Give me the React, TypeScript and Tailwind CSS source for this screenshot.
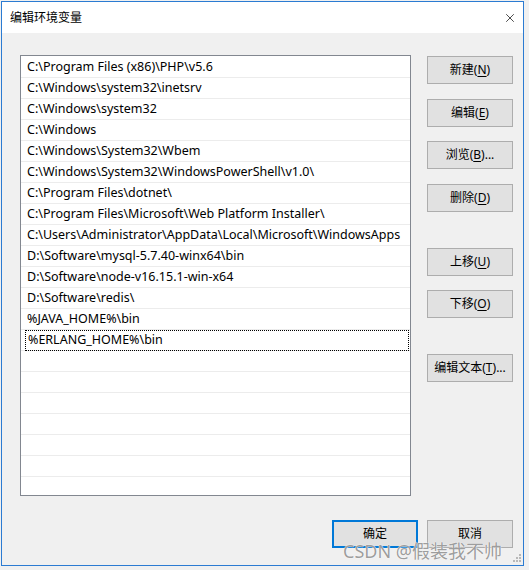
import { X } from 'lucide-react'

const paths = [
  'C:\\Program Files (x86)\\PHP\\v5.6',
  'C:\\Windows\\system32\\inetsrv',
  'C:\\Windows\\system32',
  'C:\\Windows',
  'C:\\Windows\\System32\\Wbem',
  'C:\\Windows\\System32\\WindowsPowerShell\\v1.0\\',
  'C:\\Program Files\\dotnet\\',
  'C:\\Program Files\\Microsoft\\Web Platform Installer\\',
  'C:\\Users\\Administrator\\AppData\\Local\\Microsoft\\WindowsApps',
  'D:\\Software\\mysql-5.7.40-winx64\\bin',
  'D:\\Software\\node-v16.15.1-win-x64',
  'D:\\Software\\redis\\',
  '%JAVA_HOME%\\bin',
  '%ERLANG_HOME%\\bin',
]

const font = { fontFamily: '"Noto Sans", "Noto Sans CJK SC", sans-serif' }

function WinButton({ label, mnemonic, suffix = '', className = '' }: { label: string; mnemonic?: string; suffix?: string; className?: string }) {
  return (
    <div
      className={`h-[28px] w-[86px] shrink-0 border border-[#adadad] bg-[#e1e1e1] flex items-center justify-center text-[12px] text-black ${className}`}
    >
      <span>
        {label}
        {mnemonic && (
          <>
            (<span className="underline underline-offset-2">{mnemonic}</span>)
          </>
        )}
        {suffix}
      </span>
    </div>
  )
}

export default function App() {
  const emptyRows = 7

  return (
    <div className="w-[529px] h-[570px] bg-[#f0f0f0] pt-px pl-px overflow-hidden" style={font}>
      {/* Dialog window */}
      <div className="relative w-[523px] h-[565px] border border-[#2b7bd2] bg-[#f0f0f0] flex flex-col">
        {/* Title bar */}
        <div className="h-[31px] shrink-0 bg-white flex items-center justify-between pl-[8px] pr-[5px]">
          <span className="text-[12px] text-black">编辑环境变量</span>
          <X className="w-[14px] h-[14px] text-black mr-[1px]" strokeWidth={1.2} />
        </div>

        {/* Body */}
        <div className="flex-1 flex flex-col pl-[18px] pr-[10px] pt-[22px]">
          <div className="flex gap-[16px]">
            {/* Path list */}
            <div className="w-[391px] h-[441px] border border-[#828790] bg-white overflow-hidden pt-[1px]">
              {paths.map((p, i) => (
                <div
                  key={p}
                  className="h-[21px] border-b border-[#ececec] flex items-center text-[12.5px] text-black"
                >
                  {i === paths.length - 1 ? (
                    <div className="h-[21px] w-[384px] ml-[4px] border border-dotted border-black flex items-center pl-[2px]">
                      {p}
                    </div>
                  ) : (
                    <span className="pl-[6px]">{p}</span>
                  )}
                </div>
              ))}
              {Array.from({ length: emptyRows }).map((_, i) => (
                <div key={i} className="h-[21px] border-b border-[#ececec]" />
              ))}
            </div>

            {/* Right-hand buttons */}
            <div className="flex flex-col">
              <WinButton label="新建" mnemonic="N" className="mt-[1px]" />
              <WinButton label="编辑" mnemonic="E" className="mt-[15px]" />
              <WinButton label="浏览" mnemonic="B" suffix="..." className="mt-[14px]" />
              <WinButton label="删除" mnemonic="D" className="mt-[15px]" />
              <WinButton label="上移" mnemonic="U" className="mt-[36px]" />
              <WinButton label="下移" mnemonic="O" className="mt-[14px]" />
              <WinButton label="编辑文本" mnemonic="T" suffix="..." className="mt-[36px]" />
            </div>
          </div>

          {/* OK / Cancel */}
          <div className="flex justify-end gap-[9px] mt-[24px]">
            <div className="h-[28px] w-[86px] border-2 border-[#0078d7] bg-[#e1e1e1] flex items-center justify-center text-[12px] text-black">
              确定
            </div>
            <WinButton label="取消" />
          </div>
        </div>

        {/* Resize grip */}
        <svg className="absolute right-[2px] bottom-[3px]" width="8" height="8" viewBox="0 0 8 8">
          <rect x="6" y="0" width="2" height="2" fill="#b8b8b8" />
          <rect x="3" y="3" width="2" height="2" fill="#b8b8b8" />
          <rect x="6" y="3" width="2" height="2" fill="#b8b8b8" />
          <rect x="0" y="6" width="2" height="2" fill="#b8b8b8" />
          <rect x="3" y="6" width="2" height="2" fill="#b8b8b8" />
          <rect x="6" y="6" width="2" height="2" fill="#b8b8b8" />
        </svg>

        {/* Watermark */}
        <div
          className="absolute left-[341px] top-[540px] text-[18px] leading-none text-[rgba(130,130,130,0.8)] whitespace-nowrap"
          style={{ textShadow: '0 0 1px #fff, 0 0 1px #fff' }}
        >
          CSDN @假装我不帅
        </div>
      </div>
    </div>
  )
}
